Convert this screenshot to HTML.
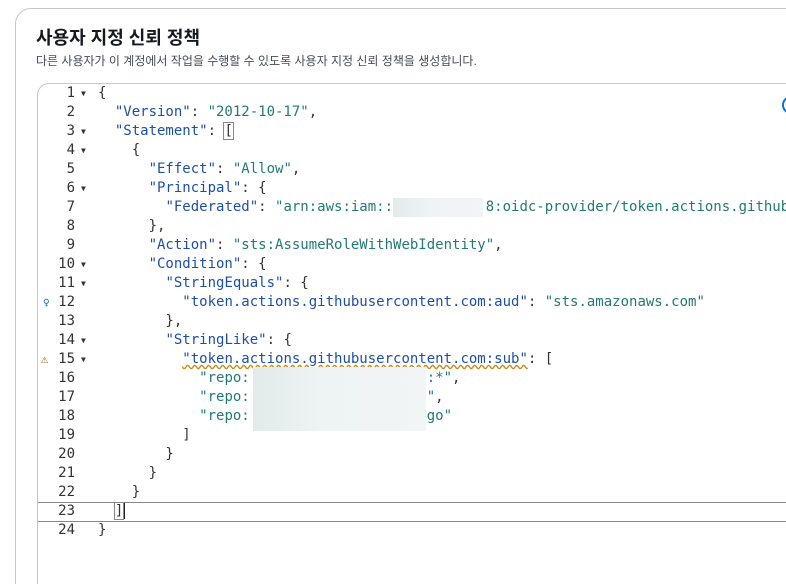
<!DOCTYPE html>
<html><head><meta charset="utf-8"><style>
html,body{margin:0;width:786px;height:584px;overflow:hidden}
body{background:#fff;font-family:"Liberation Sans","Noto Sans CJK KR",sans-serif;position:relative}
.card{position:absolute;left:15px;top:8px;width:800px;height:600px;background:#fff;border:1px solid #c6c6cd;border-radius:16px}
h1{position:absolute;left:36px;top:24px;margin:0;font-size:18px;font-weight:bold;color:#16191f}
.sub{position:absolute;left:36px;top:52px;font-size:12px;color:#414d5c}
.ed{position:absolute;left:37px;top:83px;width:780px;height:520px;border:1px solid #c6c6cd;border-radius:12px 0 0 0;background:#fff;overflow:hidden}
.ln{position:absolute;left:0;width:800px;height:19px;font-family:"DejaVu Sans Mono","Liberation Mono",monospace;font-size:14px;line-height:19px;white-space:pre;color:#333}
.n{position:absolute;left:0;width:37px;text-align:right;color:#333}
.f{position:absolute;left:43px;font-size:8px;color:#333}
.c{position:absolute;left:60px}
.k{color:#1e4fa8}.s{color:#217a76}
.blur{position:absolute;background:linear-gradient(90deg,#e2ebea,#eef3f3 40%,#f2f5f5);}
</style></head><body>
<div class="card"></div>
<h1>사용자 지정 신뢰 정책</h1>
<div class="sub">다른 사용자가 이 계정에서 작업을 수행할 수 있도록 사용자 지정 신뢰 정책을 생성합니다.</div>
<div class="ed">
<div style="position:absolute;left:0;top:418px;width:800px;height:18px;border-top:1px solid #888;border-bottom:1px solid #888"></div>
<div class="ln" style="top:0"><span class="n">1</span><span class="f">▼</span><span class="c">{</span></div>
<div class="ln" style="top:19px"><span class="n">2</span><span class="c">  <span class="k">"Version"</span>: <span class="s">"2012-10-17"</span>,</span></div>
<div class="ln" style="top:38px"><span class="n">3</span><span class="f">▼</span><span class="c">  <span class="k">"Statement"</span>: <span style="outline:1px solid #888">[</span></span></div>
<div class="ln" style="top:57px"><span class="n">4</span><span class="f">▼</span><span class="c">    {</span></div>
<div class="ln" style="top:76px"><span class="n">5</span><span class="c">      <span class="k">"Effect"</span>: <span class="s">"Allow"</span>,</span></div>
<div class="ln" style="top:95px"><span class="n">6</span><span class="f">▼</span><span class="c">      <span class="k">"Principal"</span>: {</span></div>
<div class="ln" style="top:114px"><span class="n">7</span><span class="c">        <span class="k">"Federated"</span>: <span class="s">"arn:aws:iam::2          8:oidc-provider/token.actions.githubusercontent.com"</span></span></div>
<div class="ln" style="top:133px"><span class="n">8</span><span class="c">      },</span></div>
<div class="ln" style="top:152px"><span class="n">9</span><span class="c">      <span class="k">"Action"</span>: <span class="s">"sts:AssumeRoleWithWebIdentity"</span>,</span></div>
<div class="ln" style="top:171px"><span class="n">10</span><span class="f">▼</span><span class="c">      <span class="k">"Condition"</span>: {</span></div>
<div class="ln" style="top:190px"><span class="n">11</span><span class="f">▼</span><span class="c">        <span class="k">"StringEquals"</span>: {</span></div>
<div class="ln" style="top:209px"><span class="n">12</span><span style="position:absolute;left:5px;color:#0972d3;font-size:11px">♀</span><span class="c">          <span class="k">"token.actions.githubusercontent.com:aud"</span>: <span class="s">"sts.amazonaws.com"</span></span></div>
<div class="ln" style="top:228px"><span class="n">13</span><span class="c">        },</span></div>
<div class="ln" style="top:247px"><span class="n">14</span><span class="f">▼</span><span class="c">        <span class="k">"StringLike"</span>: {</span></div>
<div class="ln" style="top:266px"><span class="n">15</span><span style="position:absolute;left:3px;color:#8d6605;font-size:12px">⚠</span><span class="f">▼</span><span class="c">          <span class="k" style="text-decoration:underline wavy #c98a1a">"token.actions.githubusercontent.com:sub"</span>: [</span></div>
<div class="ln" style="top:285px"><span class="n">16</span><span class="c">            <span class="s">"repo:                    i:*"</span>,</span></div>
<div class="ln" style="top:304px"><span class="n">17</span><span class="c">            <span class="s">"repo:                     "</span>,</span></div>
<div class="ln" style="top:323px"><span class="n">18</span><span class="c">            <span class="s">"repo:                    -go"</span></span></div>
<div class="ln" style="top:342px"><span class="n">19</span><span class="c">          ]</span></div>
<div class="ln" style="top:361px"><span class="n">20</span><span class="c">        }</span></div>
<div class="ln" style="top:380px"><span class="n">21</span><span class="c">      }</span></div>
<div class="ln" style="top:399px"><span class="n">22</span><span class="c">    }</span></div>
<div class="ln" style="top:418px"><span class="n">23</span><span class="c">  <span style="outline:1px solid #888">]</span><span style="border-left:2px solid #222"></span></span></div>
<div class="ln" style="top:437px"><span class="n">24</span><span class="c">}</span></div>
<div class="blur" style="left:355px;top:114px;width:90px;height:19px"></div>
<div class="blur" style="left:215px;top:283px;width:173px;height:64px"></div>
</div>
<div style="position:absolute;left:782px;top:96px;width:18px;height:18px;border-radius:50%;border:2px solid #0972d3;box-sizing:border-box"></div>
</body></html>
